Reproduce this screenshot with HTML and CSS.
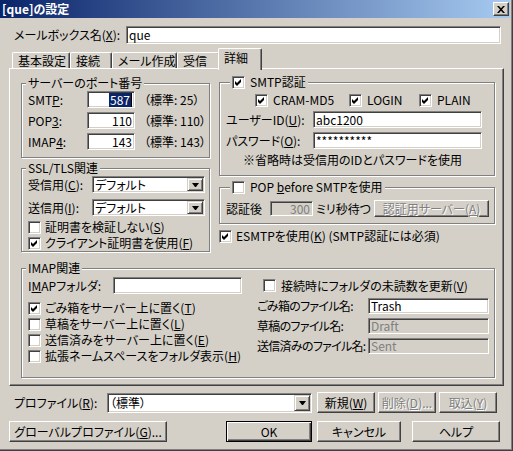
FILE: index.html
```html
<!DOCTYPE html>
<html lang="ja">
<head>
<meta charset="utf-8">
<title>[que]の設定</title>
<link rel="stylesheet" href="styles.css">
</head>
<body>
<div class="win">
  <div class="titlebar">
    <span class="title">[que]の設定</span>
    <span class="closebtn"><svg width="8" height="7" viewBox="0 0 8 7"><path d="M0 0h2l2 2.3L6 0h2L5 3.5 8 7H6L4 4.7 2 7H0l3-3.5z" fill="#000"/></svg></span>
  </div>

  <div class="mbox">
    <span class="lbl">メールボックス名(<u>X</u>):</span>
    <div class="field w-mbox">que</div>
  </div>

  <div class="tabs">
    <div class="tab t1">基本設定</div>
    <div class="tab t2">接続</div>
    <div class="tab t3">メール作成</div>
    <div class="tab t4">受信</div>
    <div class="tab sel">詳細</div>
  </div>

  <div class="panel">
    <div class="cols">
      <div class="colL">
        <div class="group g-ports">
          <div class="legend">サーバーのポート番号</div>
          <div class="ports">
            <span>SMT<u>P</u>:</span><div class="field num"><span class="hl">587</span></div><span>（標準: 25）</span>
            <span>POP<u>3</u>:</span><div class="field num">110</div><span>（標準: 110）</span>
            <span>IMAP<u>4</u>:</span><div class="field num">143</div><span>（標準: 143）</span>
          </div>
        </div>
        <div class="group g-ssl">
          <div class="legend">SSL/TLS関連</div>
          <div class="ssl">
            <span>受信用(<u>C</u>):</span>
            <div class="combo"><span class="ctext">デフォルト</span><span class="cbtn"><svg width="7" height="4" viewBox="0 0 7 4"><path d="M0 0H7L4 4H3Z" fill="#000"/></svg></span></div>
            <span>送信用(<u>I</u>):</span>
            <div class="combo"><span class="ctext">デフォルト</span><span class="cbtn"><svg width="7" height="4" viewBox="0 0 7 4"><path d="M0 0H7L4 4H3Z" fill="#000"/></svg></span></div>
          </div>
          <div class="ssl-cbs">
            <div class="chk"><span class="cb"></span><span>証明書を検証しない(<u>S</u>)</span></div>
            <div class="chk"><span class="cb"><svg width="7" height="7" viewBox="0 0 7 7"><path d="M0 2L2 4 6 0V3L2 7 0 5Z" fill="#000"/></svg></span><span>クライアント証明書を使用(<u>F</u>)</span></div>
          </div>
        </div>
      </div>

      <div class="colR">
        <div class="group g-auth">
          <div class="legend withcb"><span class="cb"><svg width="7" height="7" viewBox="0 0 7 7"><path d="M0 2L2 4 6 0V3L2 7 0 5Z" fill="#000"/></svg></span><span>SMTP認証</span></div>
          <div class="cbrow">
            <div class="chk c-cram"><span class="cb"><svg width="7" height="7" viewBox="0 0 7 7"><path d="M0 2L2 4 6 0V3L2 7 0 5Z" fill="#000"/></svg></span><span>CRAM-MD5</span></div>
            <div class="chk c-login"><span class="cb"><svg width="7" height="7" viewBox="0 0 7 7"><path d="M0 2L2 4 6 0V3L2 7 0 5Z" fill="#000"/></svg></span><span>LOGIN</span></div>
            <div class="chk"><span class="cb"><svg width="7" height="7" viewBox="0 0 7 7"><path d="M0 2L2 4 6 0V3L2 7 0 5Z" fill="#000"/></svg></span><span>PLAIN</span></div>
          </div>
          <div class="auth-grid">
            <span>ユーザーID(<u>U</u>):</span><div class="field">abc1200</div>
            <span>パスワード(<u>O</u>):</span><div class="field">**********</div>
          </div>
          <div class="note">※省略時は受信用のIDとパスワードを使用</div>
        </div>

        <div class="group g-pop">
          <div class="legend withcb"><span class="cb"></span><span>POP <u>b</u>efore SMTPを使用</span></div>
          <div class="poprow">
            <span class="lab">認証後</span>
            <div class="field dis">300</div>
            <span class="ms">ミリ秒待つ</span>
            <div class="btn srv"><span class="distext">認証用サーバー(<u>A</u>)</span></div>
          </div>
        </div>

        <div class="chk esmtp"><span class="cb"><svg width="7" height="7" viewBox="0 0 7 7"><path d="M0 2L2 4 6 0V3L2 7 0 5Z" fill="#000"/></svg></span><span>ESMTPを使用(<u>K</u>) (SMTP認証には必須)</span></div>
      </div>
    </div>

    <div class="group g-imap">
      <div class="legend">IMAP関連</div>
      <div class="imaprow1">
        <span class="lab">I<u>M</u>APフォルダ:</span>
        <div class="field"></div>
        <div class="chk"><span class="cb"></span><span>接続時にフォルダの未読数を更新(<u>V</u>)</span></div>
      </div>
      <div class="imapblock">
        <div class="imapL">
          <div class="chk"><span class="cb"><svg width="7" height="7" viewBox="0 0 7 7"><path d="M0 2L2 4 6 0V3L2 7 0 5Z" fill="#000"/></svg></span><span>ごみ箱をサーバー上に置く(<u>T</u>)</span></div>
          <div class="chk"><span class="cb"></span><span>草稿をサーバー上に置く(<u>L</u>)</span></div>
          <div class="chk"><span class="cb"></span><span>送信済みをサーバー上に置く(<u>E</u>)</span></div>
          <div class="chk"><span class="cb"></span><span>拡張ネームスペースをフォルダ表示(<u>H</u>)</span></div>
        </div>
        <div class="imapR">
          <span>ごみ箱のファイル名:</span><div class="field">Trash</div>
          <span>草稿のファイル名:</span><div class="field dis">Draft</div>
          <span>送信済みのファイル名:</span><div class="field dis">Sent</div>
        </div>
      </div>
    </div>
  </div>

  <div class="profile">
    <span class="lab">プロファイル(<u>R</u>):</span>
    <div class="combo"><span class="ctext">（標準）</span><span class="cbtn"><svg width="7" height="4" viewBox="0 0 7 4"><path d="M0 0H7L4 4H3Z" fill="#000"/></svg></span></div>
    <div class="btn first">新規(<u>W</u>)</div>
    <div class="btn"><span class="distext">削除(<u>D</u>)...</span></div>
    <div class="btn"><span class="distext">取込(<u>Y</u>)</span></div>
  </div>

  <div class="btnrow">
    <div class="btn global">グローバルプロファイル(<u>G</u>)...</div>
    <div class="btn ok">OK</div>
    <div class="btn cancel">キャンセル</div>
    <div class="btn help">ヘルプ</div>
  </div>
</div>
</body>
</html>
```

FILE: styles.css
```css
* { box-sizing: border-box; }
html, body { margin: 0; padding: 0; }
body {
  width: 513px; height: 451px; overflow: hidden;
  background: #D4D0C8;
  font-family: "Noto Sans CJK JP", "Liberation Sans", sans-serif;
  font-size: 12px; line-height: 14px; color: #000;
  font-feature-settings: "palt";
}
u { text-decoration: underline; text-underline-offset: 1px; }

.win {
  width: 513px; height: 451px; background: #D4D0C8;
  padding: 0 3px 4px 0;
  box-shadow: inset -1px -1px 0 #404040, inset -2px -2px 0 #808080;
}

.titlebar {
  height: 18px; display: flex; align-items: center; justify-content: space-between;
  padding: 0 1px 0 2px;
  background: linear-gradient(to right, #0A246A, #A6CAF0);
}
.title { color: #fff; font-weight: bold; }
.closebtn {
  width: 16px; height: 14px; display: flex; align-items: center; justify-content: center;
  background: #D4D0C8;
  border: 1px solid; border-color: #fff #404040 #404040 #fff;
  box-shadow: inset -1px -1px 0 #808080;
}

.field {
  background: #fff; height: 17px;
  border: 1px solid; border-color: #808080 #fff #fff #808080;
  box-shadow: inset 1px 1px 0 #404040, inset -1px -1px 0 #D4D0C8;
  display: flex; align-items: center; padding: 0 2px;
  white-space: nowrap; overflow: hidden;
}
.field.dis { background: #D4D0C8; color: #808080; }

.mbox { display: flex; align-items: center; height: 18px; margin-top: 8px; padding-left: 14px; }
.mbox .lbl { width: 112px; }
.w-mbox { width: 375px; height: 18px; }

.tabs { display: flex; align-items: flex-end; height: 20px; margin: 4px 0 0 12px; }
.tab {
  height: 16px; padding: 1px 0 0 5px; white-space: nowrap;
  border: 1px solid; border-bottom: 0; border-color: #fff #404040 #404040 #fff;
  border-radius: 2px 2px 0 0;
  box-shadow: inset -1px 0 0 #808080;
}
.t1 { width: 58px; }
.t2 { width: 42px; }
.t3 { width: 65px; }
.t4 { width: 43px; }
.tab.sel {
  width: 44px; height: 22px; margin: 0 -2px -2px; padding-top: 2px;
  position: relative; z-index: 1; background: #D4D0C8;
}

.panel {
  margin-left: 9px; width: 495px; height: 318px;
  border: 1px solid; border-color: #fff #404040 #404040 #fff;
  box-shadow: inset -1px -1px 0 #808080;
  padding: 14px 0 0 11px;
}
.cols { display: grid; grid-template-columns: 189px 276px; column-gap: 9px; align-items: start; }
.colR { margin-top: -1px; }

.group {
  border: 1px solid #808080;
  box-shadow: 1px 1px 0 #fff, inset 1px 1px 0 #fff;
  padding: 0 6px 7px;
}
.legend {
  display: flex; align-items: center; width: max-content; height: 14px;
  margin: -8px 0 0 -2px; padding: 0 2px; background: #D4D0C8;
}
.legend.withcb { margin-left: 4px; gap: 5px; }

.ports {
  display: grid; grid-template-columns: 50px 48px max-content;
  column-gap: 9px; row-gap: 4px; align-items: center; margin-top: 1px;
}
.num { justify-content: flex-end; padding-right: 2px; }
.hl { background: #0A246A; color: #fff; padding: 0 1px; border-right: 1px solid #000; }

.g-ssl { margin-top: 10px; padding-bottom: 0; }
.ssl { display: grid; grid-template-columns: 64px 113px; row-gap: 6px; align-items: center; margin-top: 1px; }
.combo {
  display: flex; height: 17px; background: #fff; padding: 1px;
  border: 1px solid; border-color: #808080 #fff #fff #808080;
  box-shadow: inset 1px 1px 0 #404040, inset -1px -1px 0 #D4D0C8;
}
.ctext { flex: 1; min-width: 0; padding-left: 1px; display: flex; align-items: center; white-space: nowrap; }
.cbtn {
  width: 16px; flex: none; display: flex; align-items: center; justify-content: center;
  background: #D4D0C8;
  border: 1px solid; border-color: #D4D0C8 #404040 #404040 #D4D0C8;
  box-shadow: inset 1px 1px 0 #fff, inset -1px -1px 0 #808080;
}
.ssl-cbs { margin-top: 3px; }
.ssl-cbs .chk { height: 16px; }

.chk { display: flex; align-items: center; height: 14px; gap: 4px; white-space: nowrap; }
.cb {
  width: 13px; height: 13px; flex: none; background: #fff;
  border: 1px solid; border-color: #808080 #fff #fff #808080;
  box-shadow: inset 1px 1px 0 #404040, inset -1px -1px 0 #D4D0C8;
  display: flex; align-items: center; justify-content: center;
}

.g-auth { padding-bottom: 8px; }
.cbrow { display: flex; align-items: center; height: 14px; margin-top: 4px; padding-left: 29px; }
.cbrow .chk { gap: 5px; }
.c-cram { width: 94px; }
.c-login { width: 70px; }
.auth-grid { display: grid; grid-template-columns: 87px 169px; row-gap: 4px; align-items: center; margin-top: 4px; }
.note { margin-top: 4px; padding-left: 17px; height: 14px; }

.g-pop { margin-top: 11px; padding: 0 5px 6px 6px; }
.poprow { display: flex; align-items: center; height: 17px; margin-top: 6px; }
.poprow .lab { width: 44px; }
.poprow .field { width: 43px; height: 15px; justify-content: flex-end; }
.poprow .ms { margin-left: 3px; white-space: nowrap; }
.btn {
  display: flex; align-items: center; justify-content: center; white-space: nowrap;
  background: #D4D0C8;
  border: 1px solid; border-color: #fff #404040 #404040 #fff;
  box-shadow: inset -1px -1px 0 #808080;
}
.srv { margin-left: auto; width: 115px; height: 17px; }
.distext { color: #808080; text-shadow: 1px 1px 0 #fff; }

.esmtp { margin-top: 5px; height: 14px; }

.g-imap { margin-top: 16px; padding-bottom: 13px; width: 474px; }
.imaprow1 { display: flex; align-items: center; height: 17px; margin-top: 2px; }
.imaprow1 .lab { width: 85px; }
.imaprow1 .field { width: 129px; }
.imaprow1 .chk { margin-left: 21px; gap: 5px; }
.imapblock { display: grid; grid-template-columns: 229px max-content; margin-top: 4px; align-items: start; }
.imapL { padding-top: 2px; }
.imapL .chk { height: 16px; }
.imapR { display: grid; grid-template-columns: 111px 121px; row-gap: 4px; align-items: center; }
.imapR span { white-space: nowrap; letter-spacing: -0.7px; }
.imapR .field { height: 16px; }

.profile { display: flex; align-items: center; height: 21px; margin-top: 6px; padding-left: 14px; }
.profile .lab { width: 93px; }
.profile .combo { width: 205px; height: 20px; }
.profile .btn { width: 58px; height: 21px; margin-left: 3px; }
.profile .btn.first { margin-left: 5px; }

.btnrow { display: flex; height: 21px; margin-top: 8px; padding-left: 9px; }
.global { width: 158px; }
.ok {
  width: 86px; margin-left: 59px;
  border-color: #000;
  box-shadow: inset 1px 1px 0 #fff, inset -1px -1px 0 #404040, inset -2px -2px 0 #808080;
}
.cancel { width: 84px; margin-left: 5px; }
.help { width: 88px; margin-left: 11px; }
```
